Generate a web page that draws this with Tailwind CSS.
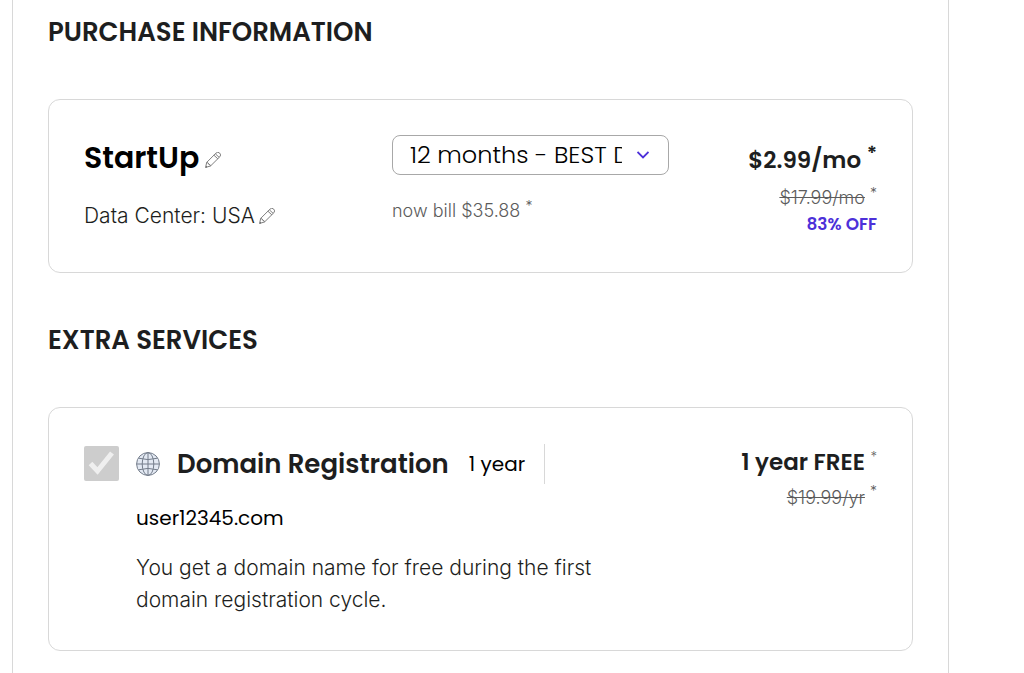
<!DOCTYPE html>
<html lang="en">

<head>
  <meta charset="UTF-8">
  <meta name="viewport" content="width=device-width, initial-scale=1.0">
  <title>Purchase Information</title>
  <script src="https://cdn.jsdelivr.net/npm/@tailwindcss/browser@4"></script>
</head>

<body class="bg-white font-['Inter',sans-serif] text-[#1d1e20]">
  <main class="ml-3 mr-[75px] min-h-screen border-x border-[#d8d8d8] px-[35px] pt-3 pb-[21px]">
    <section>
      <h2 class="text-[26px] leading-10 font-semibold font-['Poppins','Inter',sans-serif]">PURCHASE INFORMATION</h2>
      <div class="mt-[47px] flex rounded-xl border border-[#d8d8d8] px-[35px] pt-9 pb-9">
        <div class="w-[308px] shrink-0">
          <div class="flex items-center gap-1.5">
            <h3 class="text-[30px] leading-11 font-semibold text-black font-['Poppins','Inter',sans-serif]">StartUp</h3>
            <button type="button" aria-label="Edit plan" class="mt-1">
              <svg class="size-4" viewBox="0 0 16 16" fill="none" stroke="#6f6f6f" stroke-width="0.9" stroke-linejoin="round">
                <path d="M0.6 15.4 1.7 10.4 10.9 1.2a2.4 2.4 0 0 1 3.9 3.6L5.5 14Z" />
                <path d="M1.7 10.4l1.5.6.6 1.4 1.1.2.6 1.4M8.9 3.2l3.9 3.6M10.3 1.8l3.9 3.6M0.6 15.4l1.4-.4-1-1" />
              </svg>
            </button>
          </div>
          <div class="mt-5 flex items-center gap-1">
            <p class="text-[21px] leading-8 font-light">Data Center: USA</p>
            <button type="button" aria-label="Edit data center">
              <svg class="size-4" viewBox="0 0 16 16" fill="none" stroke="#6f6f6f" stroke-width="0.9" stroke-linejoin="round">
                <path d="M0.6 15.4 1.7 10.4 10.9 1.2a2.4 2.4 0 0 1 3.9 3.6L5.5 14Z" />
                <path d="M1.7 10.4l1.5.6.6 1.4 1.1.2.6 1.4M8.9 3.2l3.9 3.6M10.3 1.8l3.9 3.6M0.6 15.4l1.4-.4-1-1" />
              </svg>
            </button>
          </div>
        </div>

        <div class="w-[277px] shrink-0">
          <div class="relative -mt-px">
            <select aria-label="Billing period"
              class="h-10 w-full appearance-none rounded-lg border border-[#a8a8a8] bg-white pl-[17px] pr-[46px] text-2xl font-light text-black font-['Poppins','Inter',sans-serif]">
              <option>12 months - BEST DEAL</option>
              <option>24 months</option>
              <option>36 months</option>
            </select>
            <svg class="pointer-events-none absolute top-4 right-5 h-2 w-3" viewBox="0 0 12 8" fill="none" stroke="#4d30d9" stroke-width="1.8">
              <path d="M0.5 1 6 6.5 11.5 1" />
            </svg>
          </div>
          <p class="mt-5 text-lg leading-8 font-light text-[#5c5c5c]">now bill $35.88 <span class="relative -top-1.5 text-sm">*</span></p>
        </div>

        <div class="grow text-right">
          <p class="text-[23px] leading-12 font-semibold font-['Poppins','Inter',sans-serif]">$2.99/mo <span class="relative -top-2 text-xl">*</span></p>
          <p class="text-lg leading-7 font-light text-[#5c5c5c]"><s>$17.99/mo</s> <span class="relative -top-1.5 text-sm">*</span></p>
          <p class="text-[17px] leading-6 font-semibold text-[#4d30d9] font-['Poppins','Inter',sans-serif]">83% OFF</p>
        </div>
      </div>
    </section>

    <section class="mt-[47px]">
      <h2 class="text-[26px] leading-10 font-semibold font-['Poppins','Inter',sans-serif]">EXTRA SERVICES</h2>
      <div class="mt-[47px] flex justify-between rounded-xl border border-[#d8d8d8] px-[35px] pt-9 pb-[34px]">
        <div class="grid grid-cols-[35px_auto] gap-x-[17px]">
          <div class="relative mt-0.5 size-[35px]">
            <input type="checkbox" id="domain" checked disabled class="block size-full appearance-none rounded-xs bg-[#cdcdcd]">
            <svg class="pointer-events-none absolute inset-0 size-full" viewBox="0 0 35 35" fill="none" stroke="#efefef" stroke-width="5">
              <path d="M6.5 17.5 13.5 25 28 7" />
            </svg>
          </div>
          <div>
            <div class="flex h-10 items-center">
              <svg class="size-6 shrink-0" viewBox="0 0 24 24" fill="#e3e9f3" stroke="#747d8b" stroke-width="1">
                <circle cx="12" cy="12" r="11.4" />
                <ellipse cx="12" cy="12" rx="5.8" ry="11.4" fill="none" />
                <path d="M12 .6v22.8M.6 12h22.8M2.5 6.2Q12 9 21.5 6.2M2.5 17.8Q12 15 21.5 17.8" fill="none" />
              </svg>
              <label for="domain" class="ml-[17px] text-[26px] leading-10 font-semibold font-['Poppins','Inter',sans-serif]">Domain Registration</label>
              <span class="ml-5 text-xl text-black font-['Poppins','Inter',sans-serif]">1 year</span>
              <span class="ml-[19px] h-10 border-l border-[#d8d8d8]"></span>
            </div>
            <p class="mt-[18px] text-xl leading-8 text-black font-['Poppins','Inter',sans-serif]">user12345.com</p>
            <p class="mt-[18px] max-w-[470px] text-[21px] leading-8 font-light">You get a domain name for free during the first domain registration cycle.</p>
          </div>
        </div>

        <div class="shrink-0 text-right">
          <p class="text-[23px] leading-9 font-semibold font-['Poppins','Inter',sans-serif]">1 year FREE <span class="relative -top-2 text-sm font-light text-[#5c5c5c]">*</span></p>
          <p class="text-lg leading-9 font-light text-[#5c5c5c]"><s>$19.99/yr</s> <span class="relative -top-2 text-sm">*</span></p>
        </div>
      </div>
    </section>
  </main>
</body>

</html>
